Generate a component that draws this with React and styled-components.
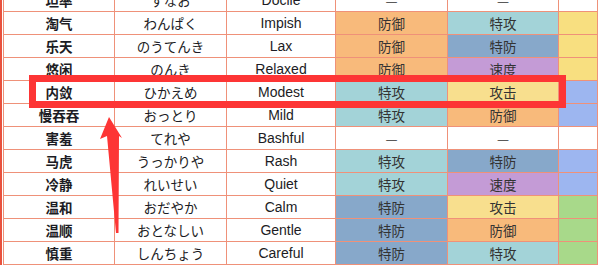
import React from "react";
import styled, { createGlobalStyle } from "styled-components";

const GlobalStyle = createGlobalStyle`
  html, body {
    margin: 0;
    padding: 0;
    background: #ffffff;
    overflow: hidden;
  }
  * {
    box-sizing: border-box;
  }
`;

const Page = styled.div`
  position: relative;
  width: 598px;
  height: 265px;
  overflow: hidden;
  border-left: 2px solid #e8523e;
  padding-left: 1px;
  font-family: "Liberation Sans", "Noto Sans CJK SC", sans-serif;
`;

const Table = styled.div`
  margin-top: -11px;
  border-left: 1px solid #ef9179;
`;

const Row = styled.div`
  display: grid;
  grid-template-columns: 111px 112px 109px 112px 111px 1fr;
  height: 23px;
`;

const COLORS = {
  防御: "#f8ba7b",
  特攻: "#a3d3d8",
  特防: "#87a8ca",
  速度: "#c49bd6",
  攻击: "#f8df8e",
};

const Cell = styled.div`
  display: flex;
  align-items: center;
  justify-content: center;
  border-right: 1px solid #ef9179;
  border-bottom: 1px solid #ef9179;
  font-size: 14px;
  color: #1c1c24;
  white-space: nowrap;
  overflow: hidden;
  background: ${(p) => p.$bg || "#ffffff"};
`;

const NameCell = styled(Cell)`
  font-family: "Noto Sans CJK SC", sans-serif;
  font-weight: 700;
  font-size: 13.5px;
`;

const KanaCell = styled(Cell)`
  font-family: "Noto Sans CJK JP", sans-serif;
  font-size: 13.5px;
`;

const EnCell = styled(Cell)`
  font-family: "Liberation Sans", Arial, sans-serif;
  font-size: 14px;
`;

const StatCell = styled(Cell)`
  font-family: "Noto Sans CJK SC", sans-serif;
  font-size: 13.5px;
  color: #333333;
`;

const Highlight = styled.div`
  position: absolute;
  left: 27px;
  top: 75px;
  width: 537px;
  height: 33px;
  border: 7px solid #fd3535;
  pointer-events: none;
`;

const Arrow = styled.svg`
  position: absolute;
  left: 0;
  top: 0;
  pointer-events: none;
`;

const rows = [
  ["坦率", "すなお", "Docile", "—", "—", null],
  ["淘气", "わんぱく", "Impish", "防御", "特攻", "#f8df80"],
  ["乐天", "のうてんき", "Lax", "防御", "特防", "#f8df80"],
  ["悠闲", "のんき", "Relaxed", "防御", "速度", "#f8df80"],
  ["内敛", "ひかえめ", "Modest", "特攻", "攻击", "#9db6f0"],
  ["慢吞吞", "おっとり", "Mild", "特攻", "防御", "#9db6f0"],
  ["害羞", "てれや", "Bashful", "—", "—", null],
  ["马虎", "うっかりや", "Rash", "特攻", "特防", "#9db6f0"],
  ["冷静", "れいせい", "Quiet", "特攻", "速度", "#9db6f0"],
  ["温和", "おだやか", "Calm", "特防", "攻击", "#a8d98a"],
  ["温顺", "おとなしい", "Gentle", "特防", "防御", "#a8d98a"],
  ["慎重", "しんちょう", "Careful", "特防", "特攻", "#a8d98a"],
];

export default function App() {
  return (
    <>
      <GlobalStyle />
      <Page>
        <Table>
          {rows.map(([cn, jp, en, up, down, tail]) => (
            <Row key={cn}>
              <NameCell>{cn}</NameCell>
              <KanaCell>{jp}</KanaCell>
              <EnCell>{en}</EnCell>
              <StatCell $bg={COLORS[up]}>{up}</StatCell>
              <StatCell $bg={COLORS[down]}>{down}</StatCell>
              <Cell $bg={tail} />
            </Row>
          ))}
        </Table>
        <Highlight />
        <Arrow width="598" height="265" viewBox="0 0 598 265">
          <polygon
            points="107,117 120,138 117,136 116.5,233 114,233 105,136 98,139"
            fill="#fd3535"
          />
        </Arrow>
      </Page>
    </>
  );
}
